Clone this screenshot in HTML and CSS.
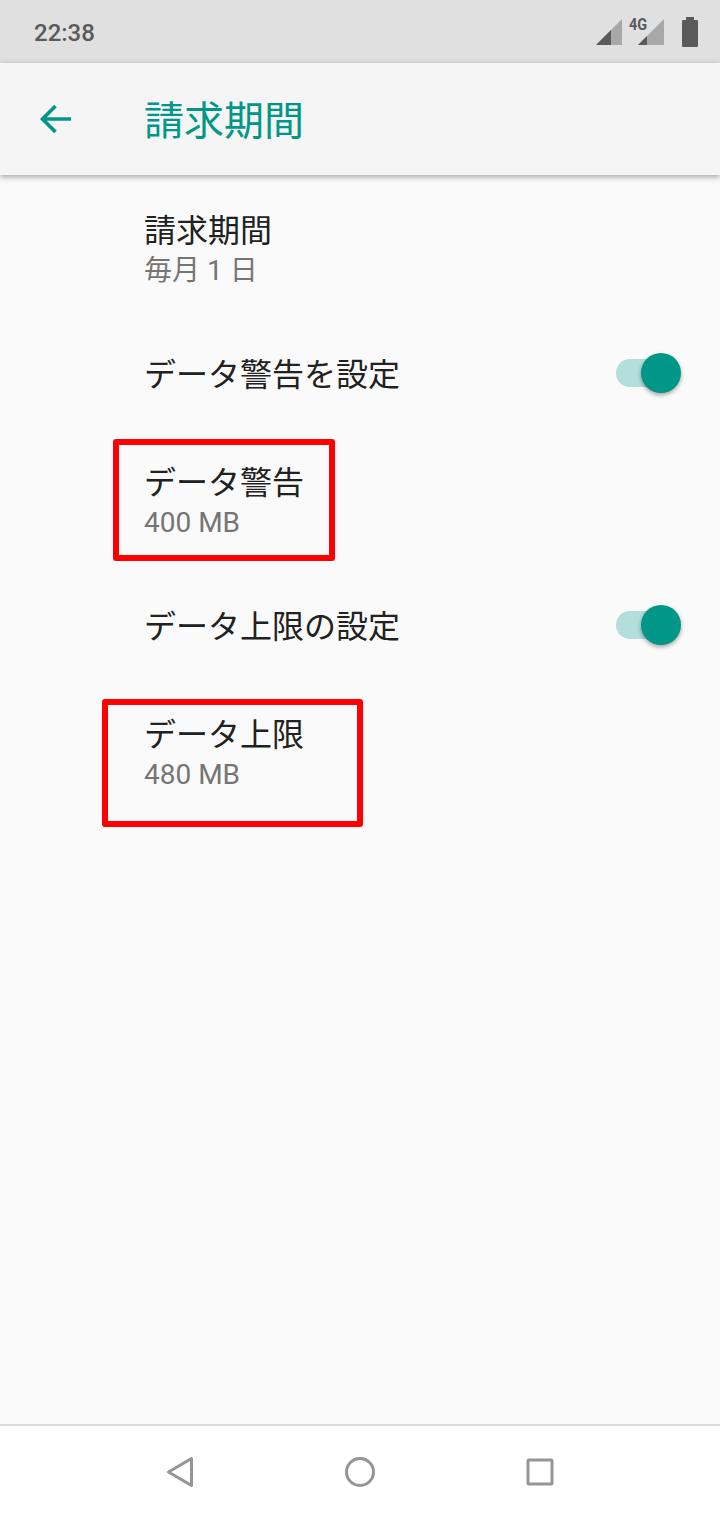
FILE: index.html
```html
<!DOCTYPE html>
<html lang="ja">
<head>
<meta charset="utf-8">
<title>請求期間</title>
<link rel="stylesheet" href="styles.css">
</head>
<body>
<div class="screen">
  <header class="status">
    <span class="time">22:38</span>
    <div class="status-icons">
      <svg class="sig" width="26" height="26" viewBox="0 0 26 26"><path d="M0 26 26 0v26z" fill="#a8a8a8"/><path d="M0 26 15 11v15z" fill="#5a5a5a"/></svg>
      <span class="net">4G</span>
      <svg class="sig" width="26" height="26" viewBox="0 0 26 26"><path d="M0 26 26 0v26z" fill="#a8a8a8"/><path d="M0 26 9 17v9z" fill="#5a5a5a"/></svg>
      <svg class="bat" width="16" height="30" viewBox="0 0 16 30"><path d="M4 0h8v3h3a1 1 0 0 1 1 1v25a1 1 0 0 1-1 1H1a1 1 0 0 1-1-1V4a1 1 0 0 1 1-1h3z" fill="#5a5a5a"/></svg>
    </div>
  </header>
  <div class="appbar">
    <svg class="back" width="34" height="32" viewBox="0 0 34 32"><path d="M32 16H4M16.500 3 3.500 16l13 13" fill="none" stroke="#009688" stroke-width="3.600"/></svg>
    <h1 class="page-title">請求期間</h1>
  </div>
  <main class="list">
    <div class="row two"><div class="title">請求期間</div><div class="sub">毎月 1 日</div></div>
    <div class="row one"><div class="title">データ警告を設定</div><div class="switch"><span class="thumb"></span></div></div>
    <div class="row two"><div class="title">データ警告</div><div class="sub">400 MB</div></div>
    <div class="row one"><div class="title">データ上限の設定</div><div class="switch"><span class="thumb"></span></div></div>
    <div class="row two"><div class="title">データ上限</div><div class="sub">480 MB</div></div>
  </main>
  <nav class="navbar">
    <svg width="28" height="32" viewBox="0 0 28 32"><path d="M25.500 2.500v27L2.500 16z" fill="none" stroke="#959595" stroke-width="3" stroke-linejoin="round"/></svg>
    <svg width="32" height="32" viewBox="0 0 32 32"><circle cx="16" cy="16" r="13.500" fill="none" stroke="#959595" stroke-width="3"/></svg>
    <svg width="28" height="28" viewBox="0 0 28 28"><rect x="2" y="2" width="24" height="24" rx="1" fill="none" stroke="#959595" stroke-width="3"/></svg>
  </nav>
  <div class="mark mark-a"></div>
  <div class="mark mark-b"></div>
</div>
</body>
</html>
```
FILE: styles.css
```css
* { box-sizing: border-box; }
html, body { margin: 0; padding: 0; }
body { font-family: Roboto, "Noto Sans CJK JP", sans-serif; background: #fafafa; }
.screen { position: relative; width: 720px; height: 1520px; display: flex; flex-direction: column; overflow: hidden; }

.status { height: 63px; flex: none; background: #e0e0e0; display: flex; align-items: center; justify-content: space-between; padding: 0 22px 0 34px; }
.time { font-size: 24px; font-weight: 500; color: #5a5a5a; line-height: 1; position: relative; top: 1px; }
.status-icons { display: flex; align-items: flex-start; height: 63px; padding-top: 17px; }
.sig { margin-top: 2px; }
.net { font-size: 17px; font-weight: 700; line-height: 14px; color: #5a5a5a; width: 16px; margin-left: 7px; margin-right: -7px; transform: scaleX(.85); transform-origin: left; }
.bat { margin-left: 18px; }

.appbar { height: 112px; flex: none; background: #f5f5f5; display: flex; align-items: center; padding-left: 39px; box-shadow: 0 2px 6px rgba(0,0,0,.35); position: relative; z-index: 1; }
.back { flex: none; }
.page-title { margin: 0 0 0 71px; font-size: 40px; line-height: 48px; font-weight: 400; color: #009688; font-family: "Noto Sans CJK JP", sans-serif; position: relative; top: -1px; }

.list { flex: 1; padding-top: 3px; }
.row { padding-left: 144px; }
.row.two { height: 136px; padding-top: 30px; }
.row.one { height: 116px; display: flex; align-items: center; justify-content: space-between; padding-right: 39px; }
.title { font-size: 32px; line-height: 40px; color: #212121; font-family: "Noto Sans CJK JP", sans-serif; }
.sub { font-size: 28px; line-height: 40px; color: #757575; font-family: Roboto, "Noto Sans CJK JP", sans-serif; position: relative; top: 3px; }

.switch { position: relative; width: 56px; height: 28px; border-radius: 14px; background: #b2dfdb; margin-right: 9px; top: 1px; }
.thumb { position: absolute; right: -9px; top: -6px; width: 40px; height: 40px; border-radius: 50%; background: #009688; box-shadow: 0 2px 4px rgba(0,0,0,.35); }

.navbar { height: 96px; flex: none; background: #fff; border-top: 2px solid #dcdcdc; display: flex; align-items: center; justify-content: center; gap: 150px; padding-bottom: 2px; }

.mark { position: absolute; border: 6px solid #f00; border-radius: 3px; }
.mark-a { left: 113px; top: 439px; width: 222px; height: 122px; }
.mark-b { left: 102px; top: 699px; width: 261px; height: 128px; }
```
